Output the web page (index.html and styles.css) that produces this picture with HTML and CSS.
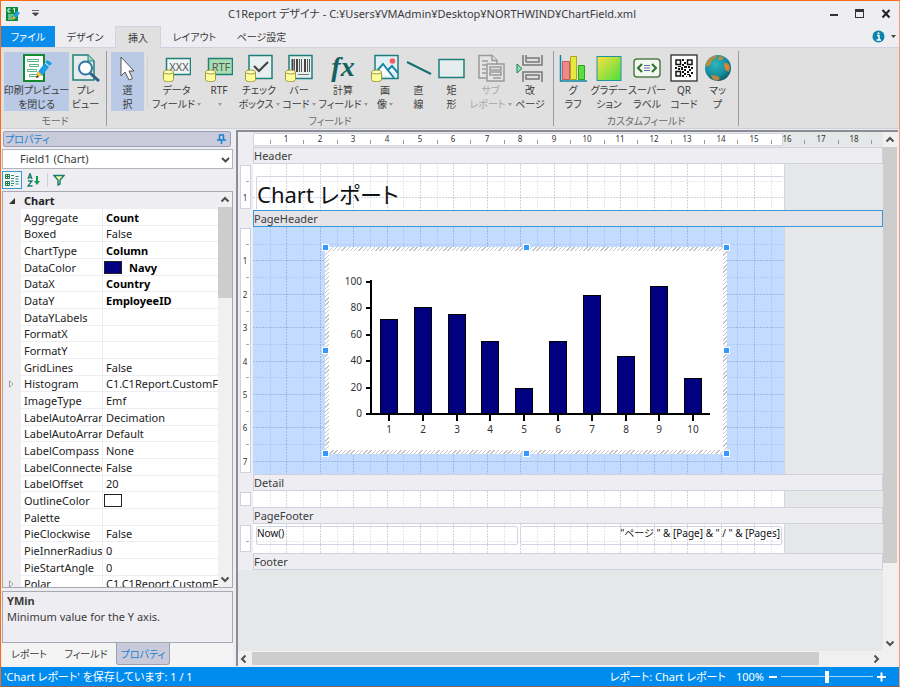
FILE: index.html
```html
<!DOCTYPE html>
<html lang="ja">
<head>
<meta charset="utf-8">
<title>C1Report デザイナ</title>
<link rel="stylesheet" href="styles.css">
</head>
<body>
<svg class="defs" aria-hidden="true">
  <defs>
    <linearGradient id="grad" x1="0" y1="0" x2="1" y2="1"><stop offset="0" stop-color="#ffe040"/><stop offset="1" stop-color="#48e040"/></linearGradient>
    <radialGradient id="sea" cx=".4" cy=".35" r=".7"><stop offset="0" stop-color="#2fb5bd"/><stop offset=".6" stop-color="#1592a2"/><stop offset="1" stop-color="#0b5866"/></radialGradient>
    <g id="db"><path d="M.5 18v7.500c0 3 10 3 10 0V18" fill="#ffff9c" stroke="#9a9a3c"/><ellipse cx="5.500" cy="18" rx="5" ry="2" fill="#ffffc4" stroke="#9a9a3c"/></g>
    <g id="pen"><path d="M13 19L23 6l5 3-10 13z" fill="#1d9ce0"/><path d="M21 9l4.500 3.500" stroke="#fff"/><path d="M14 17l4 4-6 3z" fill="#ffc233"/><path d="M12 24l1-3 2 2z" fill="#333"/></g>
    <g id="chev-up"><path d="M1.500 6.500L5 3l3.500 3.500" fill="none" stroke="#505050" stroke-width="2"/></g>
  </defs>
</svg>
<div class="window">
  <header class="titlebar">
    <div class="quick">
      <svg width="16" height="16" viewBox="0 0 16 16"><rect x="1" y="1" width="12" height="14" fill="#0b8a3c"/><path d="M5.500 3H3v3h2.500M8 3l1.500-.5V6.500" stroke="#fff" fill="none"/><path d="M3 9h6M3 11h4M3 13h4" stroke="#c9f0d0"/><path d="M8 10l4-5 3 2-4 5z" fill="#1d9ce0"/><path d="M8 10l3 2-4 2z" fill="#ffc233"/></svg>
      <svg width="7" height="7" viewBox="0 0 7 7"><path d="M0 .5h7M.5 3h6L3.500 6z" stroke="#444" fill="#444" stroke-width=".8"/></svg>
    </div>
    <h1>C1Report デザイナ - C:¥Users¥VMAdmin¥Desktop¥NORTHWIND¥ChartField.xml</h1>
    <div class="winbtns">
      <button aria-label="最小化"><svg width="10" height="10"><path d="M1 6h8" stroke="#333" stroke-width="2"/></svg></button>
      <button aria-label="最大化"><svg width="10" height="10"><path d="M1 1.500h8" stroke="#333" stroke-width="3"/><rect x=".5" y=".5" width="8" height="8" fill="none" stroke="#333"/></svg></button>
      <button aria-label="閉じる"><svg width="10" height="10"><path d="M1.500 1l7 7.500M8.500 1l-7 7.500" stroke="#222" stroke-width="2"/></svg></button>
    </div>
  </header>
  <nav class="tabs">
    <button class="file">ファイル</button>
    <button>デザイン</button>
    <button class="on">挿入</button>
    <button>レイアウト</button>
    <button>ページ設定</button>
    <div class="help">
      <svg width="13" height="13"><circle cx="6.500" cy="6.500" r="6" fill="#0a84a8"/><path d="M5 5.500h2v4.500M4.500 10h4.500" stroke="#fff" stroke-width="1.500" fill="none"/><circle cx="6.500" cy="3.200" r="1" fill="#fff"/></svg>
      <svg width="5" height="3"><path d="M0 0h5L2.500 3z" fill="#444"/></svg>
    </div>
  </nav>
  <div class="ribbon">
    <section class="group mode">
      <div class="tools">
        <button class="hot"><svg width="30" height="28" viewBox="0 0 30 28"><rect x="2" y="1" width="20" height="26" fill="#fff" stroke="#138a2d" stroke-width="2"/><path d="M5.500 5.500h11v2h-11zM7.500 10.500h9v2h-9zM5.500 15.500h9v2h-9zM7.500 20.500h8v2h-8z" fill="#fff" stroke="#58b58a"/><use href="#pen" x="2"/></svg><span>印刷プレビュー<br>を閉じる</span></button>
        <button><svg width="28" height="28" viewBox="0 0 28 28"><path d="M1 1h15l6 6v19H1z" fill="#e6ecec" stroke="#1f7f7a" stroke-width="1.500"/><path d="M16 1v6h6" fill="#a9dcc0" stroke="#1f7f7a"/><path d="M18 19l9 8" stroke="#2f5d86" stroke-width="3"/><circle cx="13.500" cy="14" r="6.500" fill="#fff" stroke="#2d76a5" stroke-width="2"/></svg><span>プレ<br>ビュー</span></button>
      </div>
      <h2>モード</h2>
    </section>
    <section class="group fields">
      <div class="tools">
        <button class="hot"><svg width="28" height="28" viewBox="0 0 28 28"><path d="M7 3v19l4-4 4 8 3.500-1.500L15 17h5z" fill="#fff" stroke="#555"/></svg><span>選<br>択</span></button>
        <i></i>
        <button><svg width="28" height="28" viewBox="0 0 28 28"><rect x="3.500" y="4.500" width="24" height="16" fill="#f0f4f3" stroke="#1f7f7a" stroke-width="1.500"/><text class="glyph" x="16" y="17">XXX</text><use href="#db"/></svg><span>データ<br>フィールド<b></b></span></button>
        <button><svg width="28" height="28" viewBox="0 0 28 28"><rect x="3.500" y="4.500" width="24" height="16" fill="#a9dfb0" stroke="#1f7f7a" stroke-width="1.500"/><text class="glyph" x="16" y="17">RTF</text><use href="#db"/></svg><span>RTF<br><b></b></span></button>
        <button><svg width="28" height="28" viewBox="0 0 28 28"><rect x="4" y="1.500" width="23" height="23" fill="#e9eeee" stroke="#1f7f7a" stroke-width="1.500"/><path d="M9 12l5 5 9-9" stroke="#444" stroke-width="2.200" fill="none"/><use href="#db"/></svg><span>チェック<br>ボックス<b></b></span></button>
        <button><svg width="28" height="28" viewBox="0 0 28 28"><rect x="4" y="1.500" width="23" height="23" fill="#e9eeee" stroke="#1f7f7a" stroke-width="1.500"/><path d="M7.500 5v13M12 5v13M20 5v13" stroke="#444" stroke-width="2"/><path d="M9.500 5v13M14.500 5v13M16.500 5v13M22.500 5v13M24.500 5v13" stroke="#555"/><path d="M13 20.500h11" stroke="#777"/><use href="#db"/></svg><span>バー<br>コード<b></b></span></button>
        <button><svg width="28" height="28" viewBox="0 0 28 28"><text class="fx" x="14" y="22">fx</text></svg><span>計算<br>フィールド<b></b></span></button>
        <button><svg width="28" height="28" viewBox="0 0 28 28"><rect x="4" y="1.500" width="23" height="23" fill="#dff1f4" stroke="#1f7f7a" stroke-width="1.500"/><path d="M5 18l7-8 11 14M17 16l4-4 6 7" stroke="#1787a6" stroke-width="2" fill="#fff"/><circle cx="21.500" cy="7" r="2.800" fill="#fb5a5a"/><use href="#db"/></svg><span>画<br>像<b></b></span></button>
        <button><svg width="28" height="28" viewBox="0 0 28 28"><path d="M2 8l24 12" stroke="#16716e" stroke-width="2"/></svg><span>直<br>線</span></button>
        <button><svg width="28" height="28" viewBox="0 0 28 28"><rect x="1" y="5.500" width="25" height="18" fill="#e6edef" stroke="#1f7f7a" stroke-width="1.500"/></svg><span>矩<br>形</span></button>
        <button disabled><svg width="28" height="28" viewBox="0 0 28 28"><g stroke="#999" fill="#e4e4e4" stroke-width="1.500"><path d="M2 1.500h13l5 5V24H2z"/><path d="M15 1.500v5h5M5 7h6M5 11h6M5 15h4M5 19h4"/><path d="M10 10h17v17H10z"/><path d="M13 13h11v3H13zM13 18h11v3H13zM16 24h8"/></g></svg><span>サブ<br>レポート<b></b></span></button>
        <button><svg width="28" height="28" viewBox="0 0 28 28"><path d="M7 1v10h19V1M10 4h13v4H10M10 1v7M7 28V18h19v10M10 21h13v4H10z" fill="none" stroke="#777" stroke-width="1.500"/><path d="M1 10l5 4.500L1 19z" fill="#9adfaa" stroke="#168058"/></svg><span>改<br>ページ</span></button>
      </div>
      <h2>フィールド</h2>
    </section>
    <section class="group custom">
      <div class="tools">
        <button><svg width="28" height="28" viewBox="0 0 28 28"><path d="M3.500 7.500h7v18h-7z" fill="#ee8a8a" stroke="#c85a5a"/><path d="M11.500 2.500h6v23h-6z" fill="#e8e840" stroke="#aaa81c"/><path d="M19.500 11.500h6v14h-6z" fill="#58e040" stroke="#30a020"/><path d="M1.500 1v26H28" stroke="#0c86a8" stroke-width="1.500" fill="none"/></svg><span>グ<br>ラフ</span></button>
        <button><svg width="28" height="28" viewBox="0 0 28 28"><rect x="2" y="2.500" width="24" height="24" fill="url(#grad)" stroke="#1f95a0"/></svg><span>グラデー<br>ション</span></button>
        <button><svg width="30" height="28" viewBox="0 0 30 28"><rect x="2" y="5" width="26" height="18" rx="3" fill="#f2f8ee" stroke="#4e7d4a" stroke-width="1.500"/><path d="M10 10l-4 4 4 4M20 10l4 4-4 4" stroke="#2f6e32" stroke-width="2" fill="none"/><path d="M12 11.500h6M12 14h6M12 16.500h6" stroke="#6472a8"/></svg><span>スーパー<br>ラベル</span></button>
        <button><svg width="28" height="28" viewBox="0 0 28 28"><rect x="1" y="1" width="26" height="26" fill="#fff" stroke="#444" stroke-width="1.500"/><g fill="none" stroke="#111" stroke-width="1.500"><rect x="6" y="6" width="4.500" height="4.500"/><rect x="17.500" y="6" width="4.500" height="4.500"/><rect x="6" y="17.500" width="4.500" height="4.500"/></g><path d="M12 5h2v2h-2zM14 8h2v2h-2zM12 10h2v2h-2zM5 13h2v2H5zM8 12h3v1H8zM8 14h2v2H8zM11 13h2v3h-2zM14 12h3v2h-3zM14 15h2v2h-2zM18 12h2v2h-2zM21 13h2v2h-2zM19 15h2v2h-2zM17 17h2v2h-2zM21 18h2v2h-2zM12 17h2v2h-2zM14 19h2v2h-2zM12 21h2v2h-2zM17 20h3v1h-3zM19 21h2v2h-2zM16 22h1v1h-1z" fill="#111"/></svg><span>QR<br>コード</span></button>
        <button><svg width="28" height="28" viewBox="0 0 28 28"><circle cx="14" cy="14" r="13" fill="url(#sea)"/><path d="M3 7q4-5 10-6l-1 3-4 3-2 4-4 2q-1-3 1-6zM15 2l5 1-2 3-4 0zM20 9q4-1 6 4l-1 5-4-2zM7 21l7 1 2 3-4 2q-4-1-5-6z" fill="#c98b3c" opacity=".9"/><path d="M20 10l5 2-1 4-3-2z" fill="#f07a3a"/><path d="M6 7l5-4-2 4z" fill="#6f9a48"/></svg><span>マッ<br>プ</span></button>
      </div>
      <h2>カスタムフィールド</h2>
    </section>
  </div>

  <main>
    <aside>
      <div class="panel-title"><span>プロパティ</span><svg width="9" height="10"><path d="M2.500 1v5M6.500 1v5M2 1h5M0 6h9M4.500 6v4" stroke="#1a7fcf" stroke-width="1.500"/></svg></div>
      <div class="picker"><select aria-label="オブジェクト"><option>Field1 (Chart)</option></select><svg width="9" height="6"><path d="M1 1l3.500 3.500L8 1" fill="none" stroke="#444" stroke-width="1.800"/></svg></div>
      <div class="ptools">
        <button class="sel" aria-label="項目別"><svg width="14" height="14"><path d="M.5 2.500h4v4h-4zM.5 9.500h4v4h-4zM1 4.500h3M2.500 3v3M1 11.500h3M2.500 10v3" transform="translate(0 -1)" fill="#ffffa0" stroke="#1b7d60"/><path d="M6 2.500h3M6 5.500h3M6 8h3M6 10.500h3M6 12.500h2M10.500 3.500h3M10.500 6h3M10.500 8.500h3M10.500 11h3" stroke="#2a8a72"/></svg></button>
        <button aria-label="アルファベット順"><svg width="14" height="14"><path d="M1 6l2-5.500L5 6M1.500 4.500h3M1 8h4l-4 5h4.500" stroke="#1b7d70" stroke-width="1.300" fill="none"/><path d="M10 3v7" stroke="#0d9a50" stroke-width="2"/><path d="M7 8h6l-3 4z" fill="#0d9a50"/></svg></button>
        <i></i>
        <button class="filter" aria-label="フィルタ"><svg width="12" height="12"><path d="M1 1.500h10L7 6v4l-2 1V6z" fill="#fff9a8" stroke="#1b7d70" stroke-width="1.400"/></svg></button>
      </div>
      <div class="pgrid">
        <div class="rows">
          <table>
            <colgroup><col class="c1"><col class="c2"><col></colgroup>
            <tbody>
            <tr class="cat"><td class="x"><svg width="6" height="6"><path d="M6 0v6H0z" fill="#333"/></svg></td><th colspan="2">Chart</th></tr>
            <tr><td class="x"></td><th>Aggregate</th><td><b>Count</b></td></tr>
            <tr><td class="x"></td><th>Boxed</th><td>False</td></tr>
            <tr><td class="x"></td><th>ChartType</th><td><b>Column</b></td></tr>
            <tr><td class="x"></td><th>DataColor</th><td class="c"><span class="sw navy"></span><b>Navy</b></td></tr>
            <tr><td class="x"></td><th>DataX</th><td><b>Country</b></td></tr>
            <tr><td class="x"></td><th>DataY</th><td><b>EmployeeID</b></td></tr>
            <tr><td class="x"></td><th>DataYLabels</th><td></td></tr>
            <tr><td class="x"></td><th>FormatX</th><td></td></tr>
            <tr><td class="x"></td><th>FormatY</th><td></td></tr>
            <tr><td class="x"></td><th>GridLines</th><td>False</td></tr>
            <tr><td class="x"><svg width="5" height="8"><path d="M.5 1l3.500 3-3.500 3z" fill="#fff" stroke="#999"/></svg></td><th>Histogram</th><td>C1.C1Report.CustomF</td></tr>
            <tr><td class="x"></td><th>ImageType</th><td>Emf</td></tr>
            <tr><td class="x"></td><th>LabelAutoArrar</th><td>Decimation</td></tr>
            <tr><td class="x"></td><th>LabelAutoArrar</th><td>Default</td></tr>
            <tr><td class="x"></td><th>LabelCompass</th><td>None</td></tr>
            <tr><td class="x"></td><th>LabelConnected</th><td>False</td></tr>
            <tr><td class="x"></td><th>LabelOffset</th><td>20</td></tr>
            <tr><td class="x"></td><th>OutlineColor</th><td class="c"><span class="sw"></span></td></tr>
            <tr><td class="x"></td><th>Palette</th><td></td></tr>
            <tr><td class="x"></td><th>PieClockwise</th><td>False</td></tr>
            <tr><td class="x"></td><th>PieInnerRadius</th><td>0</td></tr>
            <tr><td class="x"></td><th>PieStartAngle</th><td>0</td></tr>
            <tr><td class="x"><svg width="5" height="8"><path d="M.5 1l3.500 3-3.500 3z" fill="#fff" stroke="#999"/></svg></td><th>Polar</th><td>C1.C1Report.CustomF</td></tr>
            </tbody>
          </table>
        </div>
        <div class="vscroll"><svg width="10" height="10"><use href="#chev-up"/></svg><div class="track"><div class="thumb prop"></div></div><svg class="flip" width="10" height="10"><use href="#chev-up"/></svg></div>
      </div>
      <div class="desc"><strong>YMin</strong><p>Minimum value for the Y axis.</p></div>
      <div class="btabs"><button>レポート</button><button>フィールド</button><button class="on">プロパティ</button></div>
    </aside>

    <div class="designer">
      <div class="canvas">
        <div class="row top"><div class="gutter"></div><div class="hruler"><div class="white"></div><svg id="hr"></svg></div></div>
        <div class="row"><div class="gutter"></div><div class="band">Header</div></div>
        <div class="row h1"><div class="gutter"><svg class="vr"></svg></div><div class="paper"><svg class="grid"></svg><div class="field title">Chart レポート</div></div></div>
        <div class="row"><div class="gutter"></div><div class="band active">PageHeader</div></div>
        <div class="row h2"><div class="gutter"><svg class="vr"></svg></div><div class="paper blue"><svg class="grid"></svg>
          <div class="chart">
            <svg id="chart" viewBox="0 0 394 199"></svg>
            <i class="nw"></i><i class="n"></i><i class="ne"></i><i class="w"></i><i class="e"></i><i class="sw2"></i><i class="s"></i><i class="se"></i>
          </div>
        </div></div>
        <div class="row"><div class="gutter"></div><div class="band">Detail</div></div>
        <div class="row h3"><div class="gutter"><svg class="vr"></svg></div><div class="paper"><svg class="grid"></svg></div></div>
        <div class="row"><div class="gutter"></div><div class="band">PageFooter</div></div>
        <div class="row h4"><div class="gutter"><svg class="vr"></svg></div><div class="paper"><svg class="grid"></svg><div class="field now">Now()</div><div class="field pages">"ページ " &amp; [Page] &amp; " / " &amp; [Pages]</div></div></div>
        <div class="row"><div class="gutter"></div><div class="band">Footer</div></div>
      </div>
      <div class="vscroll big"><svg width="10" height="10"><use href="#chev-up"/></svg><div class="track"><div class="thumb"></div></div><svg class="flip" width="10" height="10"><use href="#chev-up"/></svg></div>
      <div class="hscroll"><svg class="left" width="10" height="10"><use href="#chev-up"/></svg><div class="track"><div class="thumb"></div></div><svg class="right" width="10" height="10"><use href="#chev-up"/></svg></div>
    </div>
  </main>

  <footer>
    <span>'Chart レポート' を保存しています: 1 / 1</span>
    <span class="rep">レポート: Chart レポート</span>
    <label for="zoom">100%</label>
    <button aria-label="縮小"><svg width="8" height="10"><path d="M0 5h8" stroke="#fff" stroke-width="2"/></svg></button>
    <input id="zoom" type="range" min="0" max="200" value="100">
    <button aria-label="拡大"><svg width="10" height="10"><path d="M0 5h9M4.500 .5v9" stroke="#fff" stroke-width="2"/></svg></button>
  </footer>
</div>
<script src="designer.js"></script>
</body>
</html>
```
FILE: styles.css
```css
* { box-sizing: border-box; }
body {
  margin: 0;
  font: 11px/14px "Noto Sans", "Noto Sans CJK JP", sans-serif;
  font-feature-settings: "palt";
  color: #3c3c3c;
  background: #ededf2;
}
button, select, input { font: inherit; color: inherit; margin: 0; padding: 0; border: 0; background: none; }
h1, h2, p { margin: 0; font-weight: 400; }
svg { display: block; flex: none; }
.defs { position: absolute; width: 0; height: 0; }

.window {
  display: flex;
  flex-direction: column;
  height: 100vh;
  border: 1px solid #ff6a13;
  border-right-color: #f0a070;
  border-bottom-color: #8c6058;
  overflow: hidden;
}

/* title bar and tabs */
.titlebar { display: flex; align-items: center; height: 25px; flex: none; }
.quick { display: flex; align-items: center; gap: 11px; width: 70px; padding-left: 4px; }
.titlebar h1 { flex: 1; text-align: center; font-size: 11px; white-space: nowrap; }
.winbtns { display: flex; gap: 16px; width: 106px; padding-right: 8px; justify-content: flex-end; }
.tabs { display: flex; height: 22px; flex: none; border-bottom: 1px solid #d2d2de; }
.tabs button { width: 60px; height: 22px; font-size: 10px; white-space: nowrap; }
.tabs .file { width: 54px; background: #0a8cea; color: #fff; height: 21px; }
.tabs .on { width: 46px; background: #e0e0e0; border: 1px solid #d2d2de; border-bottom: 0; }
.tabs button:nth-child(n+4) { width: 67px; }
.help { display: flex; align-items: center; gap: 6px; margin-left: auto; padding-right: 3px; }

/* ribbon */
.ribbon { display: flex; height: 81px; flex: none; background: #e0e0e0; border-bottom: 1px solid #cfcfd8; padding: 3px 0 0 3px; }
.group { height: 75px; border-right: 1px solid #9a9aa8; display: flex; flex-direction: column; }
.group h2 { text-align: center; font-size: 10px; color: #6c6c6c; margin-top: 3px; }
.tools { display: grid; height: 61px; padding-top: 1px; }
.mode .tools { grid-template-columns: 65px 33px; padding-right: 4px; }
.fields .tools { grid-template-columns: 33px 9px 47px 38px 42px 38px 50px 34px 33px 33px 45px 34px; padding: 1px 6px 0 4px; }
.custom .tools { grid-template-columns: 36px 36px 40px 34px 33px; padding: 1px 4px 0 1px; }
.tools button { display: flex; flex-direction: column; align-items: center; padding-top: 2px; min-width: 0; }
.tools span { font-size: 10px; white-space: nowrap; text-align: center; margin-top: 1px; }
.tools .hot { background: #b9c9e6; }
.tools i { width: 1px; background: #d0d0d6; margin: 5px 3px 3px; }
.tools b { display: inline-block; border: 2px solid transparent; border-top: 3px solid #9a9aa2; border-bottom: 0; margin: 0 0 2px 2px; }
.tools button:disabled { color: #a8a8a8; }
.glyph { font-size: 11px; text-anchor: middle; fill: #555; }
.fx { font: italic 700 28px "Liberation Serif", serif; text-anchor: middle; fill: #14625f; }

/* left panel */
main { display: flex; flex: 1; min-height: 0; }
aside { width: 232px; display: flex; flex-direction: column; padding: 2px 0 0 1px; flex: none; }
.panel-title { display: flex; align-items: center; justify-content: space-between; height: 16px; margin: 0 2px 0 1px; padding: 0 4px 0 1px; background: #c9cbda; border: 1px solid #9c9fb4; border-radius: 2px; color: #1a7fcf; flex: none; font-size: 10px; }
.picker { position: relative; margin-top: 2px; height: 20px; flex: none; }
.picker select { appearance: none; width: 100%; height: 20px; padding-left: 17px; background: #fff; border: 1px solid #b4b4bc; border-radius: 0; }
.picker svg { position: absolute; right: 3px; top: 8px; pointer-events: none; }
.ptools { display: flex; align-items: center; height: 22px; gap: 2px; flex: none; }
.ptools button { width: 20px; height: 18px; display: grid; place-items: center; }
.ptools .sel { border: 1px solid #3a97d8; background: #f4f8fc; }
.ptools i { width: 1px; height: 14px; background: #d0d0da; margin-left: 1px; }
.ptools .filter { width: 18px; }
.pgrid { display: flex; flex: 1; min-height: 0; border: 1px solid #a8a8b0; }
.rows { flex: 1; overflow: hidden; min-width: 0; }
table { width: 100%; border-collapse: separate; border-spacing: 0; table-layout: fixed; color: #222; }
.c1 { width: 18px; }
.c2 { width: 82px; }
tr { height: 17px; }
tr:nth-child(3n) { height: 16px; }
td, th { padding: 0 0 0 3px; font-weight: 400; text-align: left; overflow: hidden; white-space: nowrap; background: #fff; border-bottom: 1px solid #ededf2; line-height: 15px; }
th { border-right: 1px solid #ededf2; }
td.x { background: #ededf2; padding-left: 6px; border: 0; }
.cat th { background: #ededf2; font-weight: 700; }
tr:nth-child(3n) td, tr:nth-child(3n) th { line-height: 14px; }
td b { font-weight: 700; color: #000; }
td.c { padding-left: 1px; }
.sw { display: inline-block; width: 18px; height: 13px; border: 1px solid #222; background: #fff; vertical-align: top; margin: 1px 7px 0 0; }
.navy { background: navy; }
.vscroll { width: 14px; display: flex; flex-direction: column; align-items: center; background: #f0f0f0; padding: 3px 0; flex: none; }
.vscroll .track { flex: 1; width: 100%; margin: 2px 0; }
.thumb { background: #cdcdcd; height: 100%; }
.prop { height: 25%; }
.flip { transform: rotate(180deg); }
.desc { height: 52px; margin-top: 3px; border: 1px solid #a8a8b0; padding: 2px 4px; flex: none; }
.desc p { margin-top: 2px; }
.btabs { display: flex; height: 24px; flex: none; background: #f4f4f4; }
.btabs button { width: 54px; height: 22px; font-size: 10px; white-space: nowrap; }
.btabs button:nth-child(2) { width: 60px; }
.btabs .on { background: #c9cbda; border: 1px solid #9c9fb4; border-top: 0; border-radius: 0 0 3px 3px; color: #1a7fcf; }

/* designer */
.designer { flex: 1; min-width: 0; margin: 1px 1px 1px 3px; border: 2px solid #8c8c94; border-width: 2px 0 0 2px; display: grid; grid-template: 1fr 15px / 1fr 15px; background: #f0f0f0; }
.canvas { background: #e6e7e9; overflow: hidden; min-width: 0; }
.row { display: flex; }
.gutter { width: 15px; background: #ededf2; flex: none; }
.band { flex: 1; height: 17px; line-height: 15px; border: 1px solid #d0d1de; background: #ededf2; }
.band.active { border-color: #3a97d8; background: #e3e3e8; }
.top { height: 15px; }
.hruler { flex: 1; position: relative; padding-top: 1px; }
.hruler .white { width: 530px; height: 13px; background: #fff; border: 1px solid #d4d5e2; }
#hr { position: absolute; left: 0; top: 0; width: 100%; height: 15px; }
.vr { width: 15px; height: 100%; }
.h1 { height: 46px; }
.h2 { height: 247px; }
.h3 { height: 16px; }
.h4 { height: 29px; }
.paper { position: relative; width: 532px; background: #fff; overflow: hidden; border-right: 1px solid #d4d5e2; }
.blue { background: #c2dbff; overflow: visible; }
.grid { width: 100%; height: 100%; }
.field { position: absolute; border: 1px solid #d4d5e2; border-radius: 2px; color: #111; white-space: nowrap; }
.title { left: 3px; right: 0; top: 12px; bottom: 0; border-right: 0; border-bottom: 0; font-size: 22px; line-height: 34px; }
.now, .pages { top: 2px; height: 19px; font-size: 10px; line-height: 12px; }
.now { left: 3px; width: 262px; }
.pages { left: 267px; width: 262px; text-align: right; padding-right: 1px; }
.chart { position: absolute; left: 72px; top: 20px; width: 402px; height: 207px; padding: 4px; background: repeating-linear-gradient(135deg, #fff 0 2px, #c4c4c4 2px 3px); }
#chart { width: 394px; height: 199px; background: #fff; }
.chart i { position: absolute; width: 5px; height: 5px; background: #3399ff; outline: 1px solid #fff; }
.nw, .n, .ne { top: -2px; }
.w, .e { top: 101px; }
.sw2, .s, .se { bottom: -2px; }
.nw, .w, .sw2 { left: -2px; }
.n, .s { left: 199px; }
.ne, .e, .se { right: -2px; }
.big .thumb { height: 85%; }
.hscroll { grid-column: 1 / -1; display: flex; align-items: center; padding: 0 17px 0 1px; }
.hscroll .track { flex: 1; height: 13px; margin: 0 3px; }
.hscroll .thumb { width: 92%; }
.left { transform: rotate(-90deg); }
.right { transform: rotate(90deg); }
.ruler-text { font-size: 8px; fill: #333; text-anchor: middle; }
.axis-text { font-size: 10px; fill: #333; }

/* status bar */
footer { display: flex; align-items: center; height: 19px; flex: none; background: #008cee; color: #fff; padding: 0 12px 0 3px; white-space: nowrap; }
.rep { margin-left: auto; margin-right: 10px; }
footer label { margin-right: 5px; }
footer input { appearance: none; width: 92px; height: 12px; margin: 0 4px; }
footer input::-webkit-slider-runnable-track { height: 12px; background: linear-gradient(#9fd4fa, #9fd4fa) center / 100% 1px no-repeat; }
footer input::-webkit-slider-thumb { appearance: none; width: 4px; height: 12px; background: #fff; }
```
FILE: designer.js
```js
const NS = "http://www.w3.org/2000/svg";
const CM = 33.4;

function add(svg, name, attrs, text) {
  const el = document.createElementNS(NS, name);
  for (const key in attrs) el.setAttribute(key, attrs[key]);
  if (text !== undefined) el.textContent = text;
  svg.appendChild(el);
}
function line(svg, x1, y1, x2, y2, attrs) {
  add(svg, "path", { d: `M${x1} ${y1}L${x2} ${y2}`, fill: "none", ...attrs });
}

/* horizontal ruler, in centimetres */
const hr = document.getElementById("hr");
for (let i = 1; i <= 37; i++) {
  const x = Math.round(i * CM / 2);
  if (i % 2) line(hr, x + 0.5, 8, x + 0.5, 12, { stroke: "#999" });
  else add(hr, "text", { x: x, y: 10, class: "ruler-text" }, i / 2);
}

/* vertical rulers */
document.querySelectorAll(".vr").forEach(svg => {
  const h = svg.parentNode.clientHeight;
  add(svg, "rect", { x: 2.5, y: 1.5, width: 10, height: h - 3, fill: "#fff", stroke: "#d0d1de" });
  for (let i = 1; i * CM / 2 < h - 3; i++) {
    const y = Math.round(i * CM / 2);
    if (i % 2) line(svg, 8, y + 0.5, 11, y + 0.5, { stroke: "#aaa" });
    else add(svg, "text", { x: 7, y: y + 4, class: "ruler-text" }, i / 2);
  }
});

/* dashed layout grid */
document.querySelectorAll(".grid").forEach(svg => {
  const w = svg.parentNode.clientWidth, h = svg.parentNode.clientHeight;
  const style = i => ({ stroke: "#4a5a80", "stroke-opacity": i % 2 ? 0.14 : 0.26, "stroke-dasharray": "2 1" });
  for (let i = 1; i * CM / 2 < w; i++) {
    const x = Math.round(i * CM / 2) + 0.5;
    line(svg, x, 0, x, h, style(i));
  }
  for (let i = 1; i * CM / 2 < h; i++) {
    const y = Math.round(i * CM / 2) + 0.5;
    line(svg, 0, y, w, y, style(i));
  }
});

/* column chart */
const chart = document.getElementById("chart");
const values = [72, 81, 76, 55, 20, 55, 90, 44, 97, 27];
const base = 163, left = 42;
for (let v = 0; v <= 100; v += 20) {
  const y = Math.round(base - v * 1.32);
  line(chart, left - 5, y, left, y, { stroke: "#000", "stroke-width": 2 });
  add(chart, "text", { x: left - 9, y: y + 3, class: "axis-text", "text-anchor": "end" }, v);
}
values.forEach((v, i) => {
  const x = Math.round(60 + i * 33.8), h = Math.round(v * 1.32);
  add(chart, "rect", { x: x - 8.5, y: base - h + 0.5, width: 17, height: h, fill: "navy", stroke: "#000" });
  line(chart, x, base, x, base + 7, { stroke: "#000", "stroke-width": 2 });
  add(chart, "text", { x: x, y: 182, class: "axis-text", "text-anchor": "middle" }, i + 1);
});
line(chart, left, 29, left, base + 1, { stroke: "#000", "stroke-width": 2 });
line(chart, left - 1, base, 381, base, { stroke: "#000", "stroke-width": 2 });
```
